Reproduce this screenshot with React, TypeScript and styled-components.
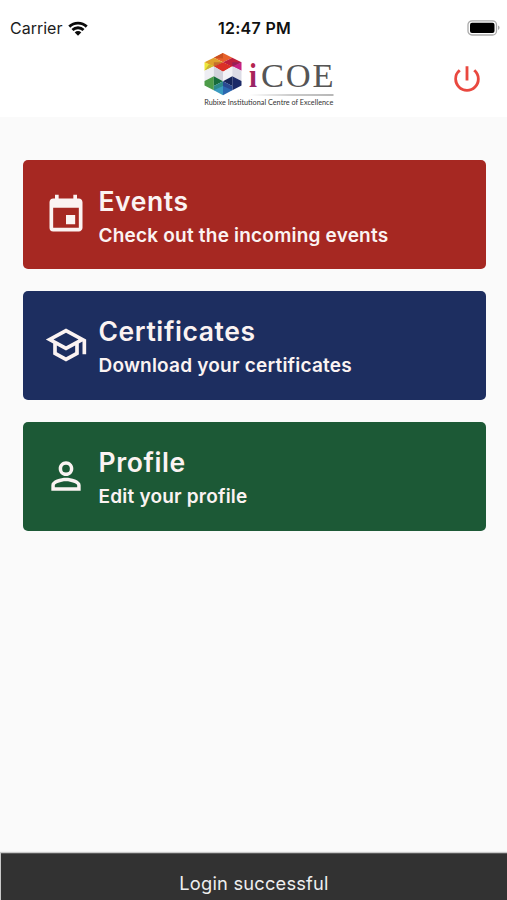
import React from "react";
import styled, { createGlobalStyle } from "styled-components";
import { MdEvent, MdOutlineSchool, MdPersonOutline, MdPowerSettingsNew } from "react-icons/md";

const GlobalStyle = createGlobalStyle`
  * { box-sizing: border-box; }
  body { margin: 0; background: #fafafa; font-family: Inter, "Liberation Sans", sans-serif; }
`;

const Screen = styled.div`
  display: flex;
  flex-direction: column;
  width: 507px;
  height: 900px;
  overflow: hidden;
  background: #fafafa;
`;

const Header = styled.header`
  flex: none;
  height: 117px;
  background: #fff;
`;

const StatusBar = styled.div`
  display: grid;
  grid-template-columns: 1fr auto 1fr;
  align-items: center;
  height: 41px;
  padding: 15px 7px 0 10px;
  color: #1c1c1c;
`;

const Carrier = styled.div`
  display: flex;
  align-items: center;
  gap: 6px;
  font-size: 16px;
  line-height: 26px;
`;

const Clock = styled.div`
  font-size: 16px;
  font-weight: 600;
  line-height: 26px;
  letter-spacing: 0.3px;
  color: #111;
  margin-right: 1px;
`;

const Battery = styled.svg`
  justify-self: end;
`;

const NavBar = styled.div`
  display: grid;
  grid-template-columns: 171px 132px 1fr;
  height: 76px;
  padding: 9px 23px 0 33px;
`;

const PowerButton = styled.button`
  justify-self: end;
  align-self: start;
  display: flex;
  margin: 12px 0 0;
  padding: 0;
  border: 0;
  background: none;
  color: #e9483f;
  font-size: 34px;
`;

const Menu = styled.main`
  flex: 1;
  display: flex;
  flex-direction: column;
  gap: 22px;
  padding: 43.3px 21px 0 22.5px;
`;

const Card = styled.a<{ $color: string }>`
  display: flex;
  align-items: center;
  gap: 10.5px;
  height: 108.8px;
  padding-left: 21.5px;
  border-radius: 5px;
  background: ${(p) => p.$color};
  color: #fbf3f2;
  font-size: 44px;
`;

const CardText = styled.div`
  display: flex;
  flex-direction: column;
  padding-top: 6px;
  white-space: nowrap;
`;

const Title = styled.span`
  font-size: 26.5px;
  font-weight: 600;
  line-height: 35px;
  letter-spacing: 0.58px;
`;

const Subtitle = styled.span`
  font-size: 19px;
  font-weight: 600;
  line-height: 33px;
  letter-spacing: 0.21px;
`;

const Toast = styled.div`
  flex: none;
  height: 47px;
  margin-left: 1px;
  padding-top: 14px;
  background: #323232;
  border-top: 1px solid #5b5b5b;
  box-shadow: 0 0 1px 1px #c9c9c9;
  color: #eee;
  font-size: 18.3px;
  line-height: 30px;
  letter-spacing: 0.2px;
  text-align: center;
`;

const Wifi = () => (
  <svg width="20" height="15" viewBox="0 0 21 16">
    <g fill="none" stroke="#0b0b0b" strokeWidth="3">
      <path d="M1.2 6A13.4 13.4 0 0 1 19.8 6" />
      <path d="M4.6 9.6A8.5 8.5 0 0 1 16.4 9.6" />
    </g>
    <path d="M7 12.2a5 5 0 0 1 7 0L10.5 15.8z" fill="#0b0b0b" />
  </svg>
);

const Logo = () => (
  <svg width="132" height="60" viewBox="0 0 132 60">
    <defs>
      <linearGradient id="rule" x1="0" x2="1">
        <stop offset="0" stopColor="#aaa" stopOpacity="0" />
        <stop offset="0.5" stopColor="#aaa" />
        <stop offset="1" stopColor="#888" />
      </linearGradient>
      <linearGradient id="initial" x1="0" x2="0" y1="0" y2="1">
        <stop offset="0" stopColor="#c02347" />
        <stop offset="1" stopColor="#8c256e" />
      </linearGradient>
    </defs>
    <path d="M19 3L28.3 7.7 19 12.3 9.8 7.7z" fill="#e8612a" />
    <path d="M19 3L9.8 7.7 19 8.5z" fill="#c9501f" />
    <path d="M9.8 7.7L19 12.3 9.8 17 .5 12.3z" fill="#dfa02c" />
    <path d="M28.3 7.7L37.5 12.3 28.3 17 19 12.3z" fill="#c01f3c" />
    <path d="M9.8 12.3H19L9.8 17z" fill="#c3702c" />
    <path d="M19 12.3L28.3 16.5 19 21.7 9.8 16.5z" fill="#db3026" />
    <path d="M.5 12.3L9.8 16.2.5 20.7z" fill="#eee839" />
    <path d="M9.8 16.2L.5 20.7 5 14.2z" fill="#c9b832" />
    <path d="M37.5 12.3v8.4L28.3 16.2z" fill="#c52184" />
    <path d="M28.3 12.3L37.5 12.3 28.3 16.5z" fill="#981e56" />
    <path d="M.5 20.7L9.8 16.2v10L.5 31z" fill="#eeeef3" />
    <path d="M9.8 16.2L19 21.7v9.6L9.8 26.2z" fill="#d2d2dc" />
    <path d="M19 21.7L28.3 16.2v10L19 31.3z" fill="#f2f2f6" />
    <path d="M28.3 16.2L37.5 20.7V31L28.3 26.2z" fill="#dcdce6" />
    <path d="M.5 31L9.8 26.2v14L.5 35.6z" fill="#4d9c49" />
    <path d="M9.8 26.2L19 31.3 9.8 36z" fill="#176c3c" />
    <path d="M9.8 36L19 31.3v9.5l-9.2-.6z" fill="#2c8a8a" />
    <path d="M28.3 26.2L37.5 31v4.6L28.3 40.2z" fill="#1c2a68" />
    <path d="M28.3 26.2L19 31.3 28.3 36z" fill="#17265a" />
    <path d="M28.3 36L19 31.3v9.5l9.3-.6z" fill="#2a4a92" />
    <path d="M9.8 40.2L19 36v9.2z" fill="#3b9bc0" />
    <path d="M28.3 40.2L19 36v9.2z" fill="#2c68b0" />
    <text x="45" y="36.7" fontFamily="Liberation Serif, serif" fontWeight="700" fontSize="34" fill="url(#initial)" textLength="8" lengthAdjust="spacingAndGlyphs">i</text>
    <text x="57" y="36.7" fontFamily="Liberation Serif, serif" fontSize="34.5" fill="#555" textLength="72.5" lengthAdjust="spacing">COE</text>
    <rect x="45" y="44.4" width="84.5" height="1.2" fill="url(#rule)" />
    <text x="0.3" y="54.8" fontFamily="Lato, sans-serif" fontSize="7.2" fill="#333" textLength="129" lengthAdjust="spacingAndGlyphs">Rubixe Institutional Centre of Excellence</text>
  </svg>
);

const items = [
  { title: "Events", text: "Check out the incoming events", color: "#a62822", icon: <MdEvent /> },
  { title: "Certificates", text: "Download your certificates", color: "#1d2e60", icon: <MdOutlineSchool /> },
  { title: "Profile", text: "Edit your profile", color: "#1c5936", icon: <MdPersonOutline /> },
];

export default function App() {
  return (
    <Screen>
      <GlobalStyle />
      <Header>
        <StatusBar>
          <Carrier>
            Carrier
            <Wifi />
          </Carrier>
          <Clock>12:47 PM</Clock>
          <Battery width="33" height="16" viewBox="0 0 33 16">
            <rect x="1" y="0.8" width="28.5" height="14.2" rx="4" fill="#fff" stroke="#aaa" strokeWidth="1.3" />
            <rect x="3" y="2.8" width="24.5" height="10.2" rx="2" fill="#000" />
            <path d="M31 5.6q1.6.6 1.6 2.2t-1.6 2.2z" fill="#aaa" />
          </Battery>
        </StatusBar>
        <NavBar>
          <span />
          <Logo />
          <PowerButton aria-label="Log out">
            <MdPowerSettingsNew />
          </PowerButton>
        </NavBar>
      </Header>
      <Menu>
        {items.map((item) => (
          <Card key={item.title} $color={item.color}>
            {item.icon}
            <CardText>
              <Title>{item.title}</Title>
              <Subtitle>{item.text}</Subtitle>
            </CardText>
          </Card>
        ))}
      </Menu>
      <Toast role="status">Login successful</Toast>
    </Screen>
  );
}
